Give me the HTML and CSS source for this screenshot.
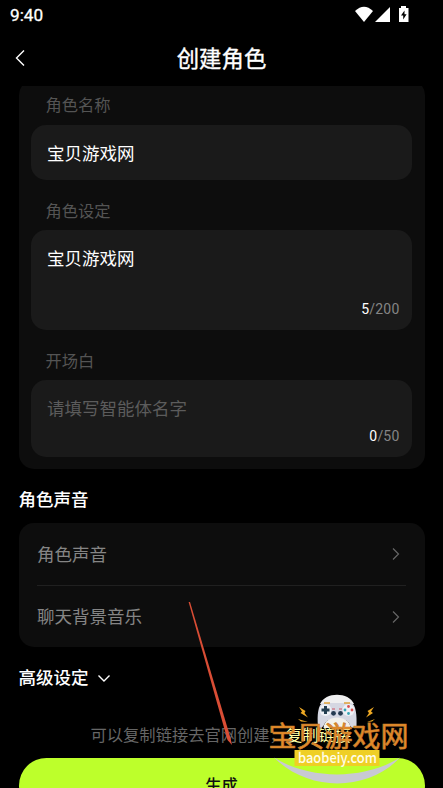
FILE: index.html
```html
<!DOCTYPE html>
<html lang="zh-CN">
<head>
<meta charset="utf-8">
<title>创建角色</title>
<link rel="stylesheet" href="styles.css">
</head>
<body>
<div class="app">
  <header class="status">
    <span class="time">9:40</span>
    <svg class="status-icons" width="56" height="18" viewBox="0 0 56 18" fill="#fff">
      <path d="M0 5Q9-3.6 18 5L9 16Z"/>
      <path d="M35 1V16H20Z"/>
      <path fill-rule="evenodd" d="M44 2H46V0H51V2H53.5V16H44ZM49.5 4.5L46 9.5H48.2V13.5L51.6 8.3H49.5Z"/>
    </svg>
  </header>
  <nav class="nav">
    <svg class="back" width="10" height="18" viewBox="0 0 10 18"><path d="M9 1.5L1.5 9L9 16.5"/></svg>
    <h1>创建角色</h1>
  </nav>
  <main class="content">
    <section class="panel form">
      <label>角色名称</label>
      <div class="field name"><span>宝贝游戏网</span></div>
      <label>角色设定</label>
      <div class="field setting"><span>宝贝游戏网</span><span class="count"><b>5</b>/200</span></div>
      <label>开场白</label>
      <div class="field opening"><span class="placeholder">请填写智能体名字</span><span class="count"><b>0</b>/50</span></div>
    </section>
    <h2>角色声音</h2>
    <section class="panel list">
      <div class="row"><span>角色声音</span><svg width="8" height="14" viewBox="0 0 8 14"><path d="M1 1.5L6.5 7L1 12.5"/></svg></div>
      <div class="row"><span>聊天背景音乐</span><svg width="8" height="14" viewBox="0 0 8 14"><path d="M1 1.5L6.5 7L1 12.5"/></svg></div>
    </section>
    <h2 class="advanced">高级设定<svg width="14" height="9" viewBox="0 0 14 9"><path d="M1.5 1.5L7 7L12.5 1.5"/></svg></h2>
    <p class="hint">可以复制链接去官网创建，<a>复制链接</a></p>
    <button class="submit">生成</button>
  </main>
  <svg class="overlay" width="443" height="788" viewBox="0 0 443 788">
    <path d="M188.6 602L190 602L230.5 738L232 745L227.5 740Z" fill="#d94d35"/>
    <path d="M274 757.5C310 780 364 780 400 757.5C369 791 309 793 274 757.5Z" fill="#c8c9d2"/>
    <path d="M320 704C325 691.500 349 691.500 354 704Z" fill="#efeff0"/>
    <path d="M318 726C317 716 318 704 323 703H351C356 704 357 716 356.500 726C354 729 350 728 349 723C345 717 329 717 325 723C323 728 320 729 318 726Z" fill="#d5d7e2"/>
    <path d="M323.500 728C324 714 350 714 350.500 728Z" fill="#f3f1eb"/>
    <path d="M324 703H330M344 703H350" stroke="#dfa33a" stroke-width="1.500"/>
    <circle cx="325.5" cy="710" r="6" fill="#eef0f5"/><circle cx="348.5" cy="710" r="6" fill="#eef0f5"/>
    <path d="M321.5 710H329.5M325.5 706V714" stroke="#233e50" stroke-width="3"/>
    <g fill="#d94f50"><circle cx="348.5" cy="706.5" r="1.4"/><circle cx="352" cy="710" r="1.4"/></g>
    <g fill="#37a4b5"><circle cx="345" cy="710" r="1.4"/><circle cx="348.5" cy="713.5" r="1.4"/></g>
    <path d="M332 709H335M339 709H342" stroke="#cf5360" stroke-width="1.2"/>
    <g fill="#263b50"><circle cx="333.5" cy="713.3" r="2.4"/><circle cx="340.5" cy="713.3" r="2.4"/></g>
    <path d="M299 707L305.500 711L304.500 713L308 717.500L300.500 713L302 711.500ZM374 707L371 711.500L373 713L366 717.500L369 713L367.500 711ZM298 719L308 722L301 721.500ZM375 719L367 722L372 721.500Z" fill="#eda823"/>
    <text class="mark" x="268.5" y="746.5" textLength="140">宝贝游戏网</text>
    <rect x="294.5" y="750" width="85" height="16" fill="#efcf25"/>
    <text class="domain" x="298" y="762.5" textLength="79" lengthAdjust="spacingAndGlyphs">baobeiy.com</text>
  </svg>
</div>
</body>
</html>
```
FILE: styles.css
```css
* { box-sizing: border-box; }
body { margin: 0; background: #000; color: #fff; font-family: Roboto, "Noto Sans CJK SC", sans-serif; }
.app { position: relative; width: 443px; height: 788px; overflow: hidden; display: flex; flex-direction: column; }
.status { height: 31px; flex: none; display: flex; justify-content: space-between; padding: 6px 32.5px 0 10px; }
.time { font-size: 17.2px; line-height: 19px; font-weight: 400; -webkit-text-stroke: .3px #fff; }
.nav { height: 55px; flex: none; display: grid; grid-template-columns: 40px 1fr 40px; align-items: center; }
.back { margin: -1px 0 0 15px; }
.back path, .row path, .advanced path { fill: none; stroke: #fff; stroke-width: 1.4; }
h1 { margin: 0; text-align: center; font-size: 22.4px; font-weight: 400; line-height: 30px; -webkit-text-stroke: .35px #fff; }
.content { flex: 1; overflow: hidden; padding: 0 18.5px; }
.panel { background: #0d0d0d; border-radius: 15px; }
.form { height: 389px; margin-top: -6px; padding: 13px 12.5px 11px; }
label { display: block; height: 25px; margin-left: 14.5px; font-size: 16.3px; line-height: 25px; color: #545454; }
.field { background: #1a1a1a; border-radius: 15px; padding: 17px 12.5px 0 16px; display: flex; flex-direction: column; font-size: 17.5px; line-height: 24px; }
.name { height: 55px; margin: 7px 0 19px; }
.setting { height: 100px; margin: 6px 0 19px; }
.opening { height: 77px; margin-top: 6px; }
.placeholder { color: #5c5c5c; }
.count { margin-top: auto; align-self: flex-end; padding-bottom: 12px; font-size: 14px; line-height: 18px; letter-spacing: .2px; color: #858585; }
.count b { color: #fff; font-weight: 400; }
h2 { margin: 19px 0 10px; font-size: 17.5px; line-height: 25px; font-weight: 500; }
.list { height: 124px; padding: 0 18.5px; }
.row { height: 62px; display: flex; justify-content: space-between; align-items: center; font-size: 17.5px; color: #858585; }
.row span { margin-top: -2px; }
.row + .row { border-top: 1px solid #202020; }
.row svg { margin-right: 6px; }
.row path { stroke: #666; stroke-width: 1.2; }
.advanced { display: flex; align-items: center; gap: 8px; margin-bottom: 32px; }
.hint { margin: 0; padding-left: 72px; white-space: nowrap; font-size: 16.3px; line-height: 25px; color: #666; }
.hint a { color: #ffffa7; }
.submit { display: block; width: 100%; height: 55px; margin: 10px 0 0; border: 0; border-radius: 27.5px; background: #bdff2b; color: #111; font: 500 16.3px/55px Roboto, "Noto Sans CJK SC", sans-serif; padding: 0; }
.overlay { position: absolute; left: 0; top: 0; pointer-events: none; }
.mark { font: 400 28px "Noto Sans CJK SC", sans-serif; fill: #e58b27; stroke: #c87e30; stroke-width: .7px; }
.domain { font: 500 14.5px "Noto Sans CJK SC", sans-serif; fill: #fffde8; }
```
